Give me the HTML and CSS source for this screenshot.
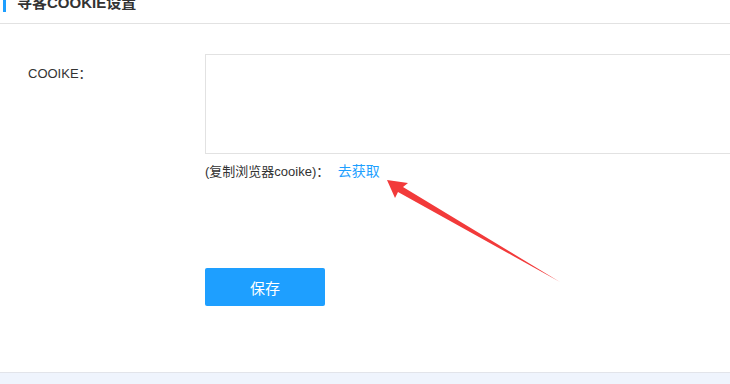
FILE: index.html
```html
<!DOCTYPE html>
<html>
<head>
	<meta charset="utf-8">
	<meta name="viewport" content="width=device-width, initial-scale=1">
	<title>寻客COOKIE设置</title>
	<link rel="stylesheet" href="styles.css">
</head>
<body>
   <div class="page">
      <div class="head">
         <span class="head-title">寻客COOKIE设置</span>
      </div>

      <div class="main">
         <div class="form-row">
            <label class="form-label" for="cookie">COOIKE：</label>
            <div class="form-field">
               <textarea id="cookie" class="cookie-box"></textarea>
               <div class="hint">(复制浏览器cooike)： <a href="#" class="hint-link">去获取</a></div>
            </div>
         </div>

         <div class="form-row">
            <div class="form-label"></div>
            <div class="form-field">
               <button class="btn-save">保存</button>
            </div>
         </div>

         <svg class="arrow" width="730" height="384" viewBox="0 0 730 384">
            <polygon points="387,180 408,183 403,187 560,282 398,192 395,198" fill="#f23a3a"/>
         </svg>
      </div>

      <div class="foot"></div>
   </div>
</body>
</html>
```

FILE: styles.css
```css
 html, body{
    margin: 0;
    padding: 0;
    overflow: hidden;
 }

 body{
    font-family: "Liberation Sans", Arial, "Noto Sans CJK SC", sans-serif;
    font-size: 13px;
    color: #333;
    background-color: #fff;
 }

 .page{
    width: 730px;
    height: 384px;
    overflow: hidden;
 }

 .head{
    height: 40px;
    margin-top: -17px;
    display: flex;
    align-items: center;
    padding-left: 3px;
    border-bottom: 1px solid #e2e2e2;
 }

 .head-title{
    border-left: 3px solid #1e9fff;
    padding-left: 11px;
    line-height: 18px;
    font-size: 15px;
    font-weight: bold;
    color: #333;
 }

 .main{
    position: relative;
    height: 318px;
    padding-top: 30px;
 }

 .form-row{
    display: flex;
 }

 .form-label{
    width: 177px;
    padding-left: 28px;
    padding-top: 10px;
    line-height: 20px;
    flex-shrink: 0;
 }

 .form-field{
    flex-shrink: 0;
 }

 .cookie-box{
    display: block;
    width: 560px;
    height: 100px;
    box-sizing: border-box;
    border: 1px solid #e2e2e2;
    resize: none;
    outline: none;
    margin: 0;
 }

 .hint{
    margin-top: 7px;
    height: 20px;
    line-height: 20px;
    color: #333;
 }

 .hint-link{
    color: #1e9fff;
    font-size: 14px;
    text-decoration: none;
    margin-left: 5px;
 }

 .btn-save{
    margin-top: 87px;
    width: 120px;
    height: 38px;
    border: none;
    border-radius: 2px;
    background-color: #1e9fff;
    color: #fff;
    font-family: "Liberation Sans", Arial, "Noto Sans CJK SC", sans-serif;
    font-size: 15px;
    cursor: pointer;
 }

 .arrow{
    position: absolute;
    left: 0;
    top: -24px;
    pointer-events: none;
 }

 .foot{
    height: 20px;
    border-top: 1px solid #e2e4ea;
    background-color: #eff4fd;
 }
```
